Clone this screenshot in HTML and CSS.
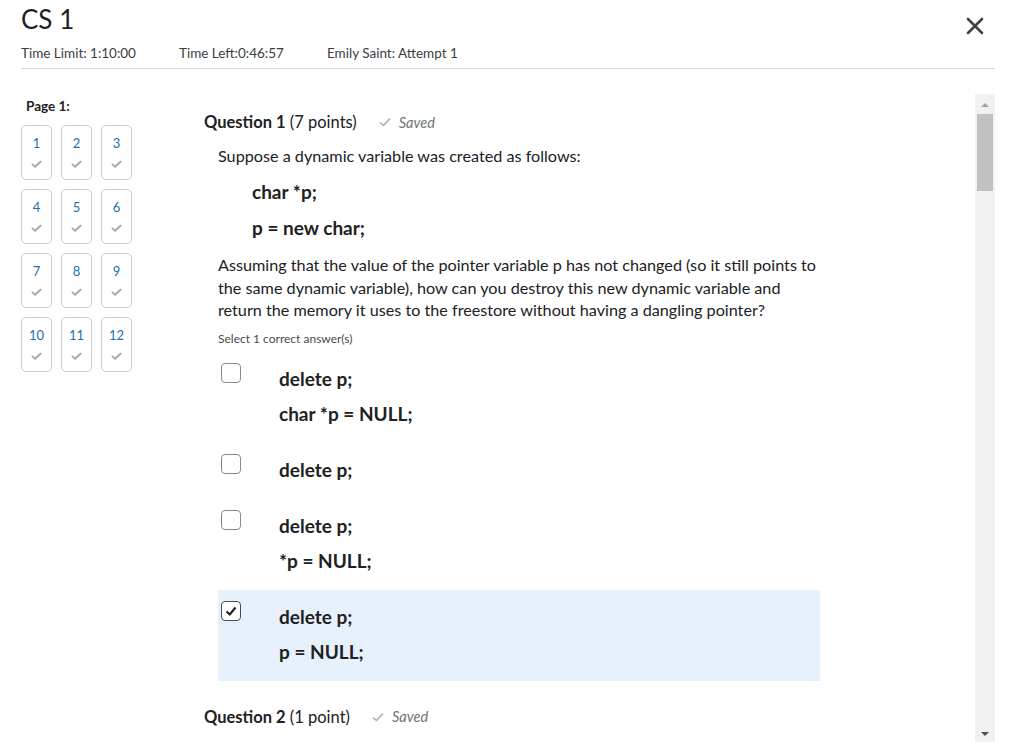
FILE: index.html
```html
<!DOCTYPE html>
<html lang="en">
<head>
<meta charset="utf-8">
<title>CS 1</title>
<link rel="stylesheet" href="styles.css">
</head>
<body>
<header class="top">
  <div class="top-left">
    <h1 class="title">CS 1</h1>
    <div class="meta">
      <span class="meta-item m1">Time Limit: 1:10:00</span>
      <span class="meta-item m2">Time Left:0:46:57</span>
      <span class="meta-item">Emily Saint: Attempt 1</span>
    </div>
  </div>
  <button class="close" aria-label="Close">
    <svg width="18" height="18" viewBox="0 0 18 18"><path d="M2 2 L16 16 M16 2 L2 16" stroke="#3f4244" stroke-width="2.6" stroke-linecap="round" fill="none"/></svg>
  </button>
</header>

<div class="main">
  <div class="scroll-area">
    <nav class="pages">
      <div class="page-label">Page 1:</div>
      <div class="tiles">
        <a class="tile"><span class="num">1</span><svg class="tchk" viewBox="0 0 12 8"><path d="M1 4 L4.5 7 L11 1" fill="none" stroke="#a4a8ab" stroke-width="1.9"/></svg></a>
        <a class="tile"><span class="num">2</span><svg class="tchk" viewBox="0 0 12 8"><path d="M1 4 L4.5 7 L11 1" fill="none" stroke="#a4a8ab" stroke-width="1.9"/></svg></a>
        <a class="tile"><span class="num">3</span><svg class="tchk" viewBox="0 0 12 8"><path d="M1 4 L4.5 7 L11 1" fill="none" stroke="#a4a8ab" stroke-width="1.9"/></svg></a>
        <a class="tile"><span class="num">4</span><svg class="tchk" viewBox="0 0 12 8"><path d="M1 4 L4.5 7 L11 1" fill="none" stroke="#a4a8ab" stroke-width="1.9"/></svg></a>
        <a class="tile"><span class="num">5</span><svg class="tchk" viewBox="0 0 12 8"><path d="M1 4 L4.5 7 L11 1" fill="none" stroke="#a4a8ab" stroke-width="1.9"/></svg></a>
        <a class="tile"><span class="num">6</span><svg class="tchk" viewBox="0 0 12 8"><path d="M1 4 L4.5 7 L11 1" fill="none" stroke="#a4a8ab" stroke-width="1.9"/></svg></a>
        <a class="tile"><span class="num">7</span><svg class="tchk" viewBox="0 0 12 8"><path d="M1 4 L4.5 7 L11 1" fill="none" stroke="#a4a8ab" stroke-width="1.9"/></svg></a>
        <a class="tile"><span class="num">8</span><svg class="tchk" viewBox="0 0 12 8"><path d="M1 4 L4.5 7 L11 1" fill="none" stroke="#a4a8ab" stroke-width="1.9"/></svg></a>
        <a class="tile"><span class="num">9</span><svg class="tchk" viewBox="0 0 12 8"><path d="M1 4 L4.5 7 L11 1" fill="none" stroke="#a4a8ab" stroke-width="1.9"/></svg></a>
        <a class="tile"><span class="num">10</span><svg class="tchk" viewBox="0 0 12 8"><path d="M1 4 L4.5 7 L11 1" fill="none" stroke="#a4a8ab" stroke-width="1.9"/></svg></a>
        <a class="tile"><span class="num">11</span><svg class="tchk" viewBox="0 0 12 8"><path d="M1 4 L4.5 7 L11 1" fill="none" stroke="#a4a8ab" stroke-width="1.9"/></svg></a>
        <a class="tile"><span class="num">12</span><svg class="tchk" viewBox="0 0 12 8"><path d="M1 4 L4.5 7 L11 1" fill="none" stroke="#a4a8ab" stroke-width="1.9"/></svg></a>
      </div>
    </nav>

    <section class="questions">
      <div class="q-head">
        <span class="q-title"><b>Question 1</b> (7 points)</span>
        <span class="saved"><svg class="schk" viewBox="0 0 12 10"><path d="M1 5.5 L4.5 8.5 L11 1.5" fill="none" stroke="#a9adb0" stroke-width="1.5"/></svg>Saved</span>
      </div>
      <div class="q-body">
        <p class="q-text">Suppose a dynamic variable was created as follows:</p>
        <div class="code">
          <div>char *p;</div>
          <div>p = new char;</div>
        </div>
        <p class="q-para">Assuming that the value of the pointer variable p has not changed (so it still points to the same dynamic variable), how can you destroy this new dynamic variable and return the memory it uses to the freestore without having a dangling pointer?</p>
        <div class="hint">Select 1 correct answer(s)</div>
        <div class="options">
          <label class="option">
            <span class="box"></span>
            <span class="opt-text"><span>delete p;</span><span>char *p = NULL;</span></span>
          </label>
          <label class="option">
            <span class="box"></span>
            <span class="opt-text"><span>delete p;</span></span>
          </label>
          <label class="option">
            <span class="box"></span>
            <span class="opt-text"><span>delete p;</span><span>*p = NULL;</span></span>
          </label>
          <label class="option selected">
            <span class="box checked"><svg viewBox="0 0 18 18"><path d="M4.5 9.5 L7.8 12.5 L13.5 5.5" fill="none" stroke="#202122" stroke-width="2.2"/></svg></span>
            <span class="opt-text"><span>delete p;</span><span>p = NULL;</span></span>
          </label>
        </div>
      </div>
      <div class="q-head q2">
        <span class="q-title"><b>Question 2</b> (1 point)</span>
        <span class="saved"><svg class="schk" viewBox="0 0 12 10"><path d="M1 5.5 L4.5 8.5 L11 1.5" fill="none" stroke="#a9adb0" stroke-width="1.5"/></svg>Saved</span>
      </div>
    </section>
  </div>
  <div class="scrollbar">
    <span class="arrow up"></span>
    <span class="thumb"></span>
    <span class="track-fill"></span>
    <span class="arrow down"></span>
  </div>
</div>
</body>
</html>
```

FILE: styles.css
```css
* { box-sizing: border-box; }
html, body { margin: 0; padding: 0; background: #fff; }
body {
  font-family: Lato, "Open Sans", "Liberation Sans", sans-serif;
  color: #202122;
  width: 1018px;
  height: 742px;
  overflow: hidden;
}

.top {
  margin: 0 23px 0 21px;
  border-bottom: 1px solid #d6d9dc;
  display: flex;
  justify-content: space-between;
  align-items: flex-start;
  height: 69px;
}
.title {
  margin: 3px 0 0 0;
  font-size: 26px;
  line-height: 32px;
  font-weight: 400;
  color: #202122;
}
.meta {
  margin-top: 10px;
  font-size: 13.5px;
  line-height: 16px;
  color: #3b3d3f;
  display: flex;
}
.meta-item.m1 { width: 158px; }
.meta-item.m2 { width: 148px; }

.close {
  border: 0;
  background: none;
  padding: 0;
  margin: 17px 11px 0 0;
  width: 18px;
  height: 18px;
  cursor: pointer;
}
.close svg { display: block; }

.main {
  display: flex;
  height: 648px;
  margin-top: 25px;
  margin-right: 23px;
}
.scroll-area {
  flex: 1;
  display: flex;
  padding-left: 21px;
  overflow: hidden;
}
.pages {
  width: 183px;
  flex: none;
  padding-top: 4px;
}
.page-label {
  font-size: 13.5px;
  line-height: 16px;
  font-weight: 700;
  margin-left: 5px;
  color: #202122;
}
.tiles {
  margin-top: 11px;
  display: grid;
  grid-template-columns: repeat(3, 31px);
  grid-auto-rows: 55px;
  gap: 9px;
}
.tile {
  border: 1px solid #c9ced2;
  border-radius: 5px;
  display: flex;
  flex-direction: column;
  align-items: center;
  padding-top: 9px;
}
.num {
  font-size: 13px;
  line-height: 16px;
  color: #1e6fb2;
}
.tchk {
  width: 11px;
  height: 8px;
  margin-top: 9px;
}

.questions {
  flex: 1;
  padding-top: 18px;
}
.q-head {
  display: flex;
  align-items: center;
  height: 20px;
}
.q-title {
  font-size: 16.5px;
  line-height: 20px;
  color: #202122;
}
.q-title b { font-weight: 700; }
.saved {
  margin-left: 22px;
  font-size: 14.5px;
  font-style: italic;
  color: #6e7376;
  display: flex;
  align-items: center;
}
.schk {
  width: 12px;
  height: 10px;
  margin-right: 8px;
}
.q-body {
  padding-left: 14px;
  width: 616px;
}
.q-text {
  margin: 13px 0 0 0;
  font-size: 16.2px;
  line-height: 22px;
}
.code {
  margin-top: 7px;
  padding-left: 34px;
  font-size: 19px;
  line-height: 36px;
  font-weight: 700;
}
.code div { display: block; }
.q-para {
  margin: 8px 0 0 0;
  font-size: 16.2px;
  line-height: 22.5px;
  width: 602px;
}
.hint {
  margin-top: 9px;
  font-size: 12px;
  line-height: 16px;
  color: #494c4e;
}
.options {
  margin-top: 5px;
  width: 602px;
}
.option {
  display: flex;
  padding: 10.5px 0 11.5px 3px;
  cursor: pointer;
}
.option.selected { background: #e7f1fb; }
.box {
  flex: none;
  width: 20px;
  height: 20px;
  margin-top: 1px;
  border: 1px solid #868b8f;
  border-radius: 4px;
  background: #fff;
}
.box.checked { border-color: #4a4d50; }
.box svg { display: block; width: 18px; height: 18px; }
.opt-text {
  margin-left: 38px;
  display: flex;
  flex-direction: column;
  font-size: 19px;
  line-height: 35px;
  font-weight: 700;
  margin-top: -1px;
}
.q2 { margin-top: 26px; }

.scrollbar {
  width: 20px;
  flex: none;
  background: #f1f1f1;
  display: flex;
  flex-direction: column;
  align-items: center;
}
.arrow {
  width: 0;
  height: 0;
  border-left: 4px solid transparent;
  border-right: 4px solid transparent;
}
.arrow.up {
  margin-top: 9px;
  border-bottom: 4px solid #a3a3a3;
}
.thumb {
  margin-top: 7px;
  width: 16px;
  height: 77px;
  background: #c1c1c1;
}
.track-fill { flex: 1; }
.arrow.down {
  margin-bottom: 6px;
  border-top: 4px solid #505050;
}
```
